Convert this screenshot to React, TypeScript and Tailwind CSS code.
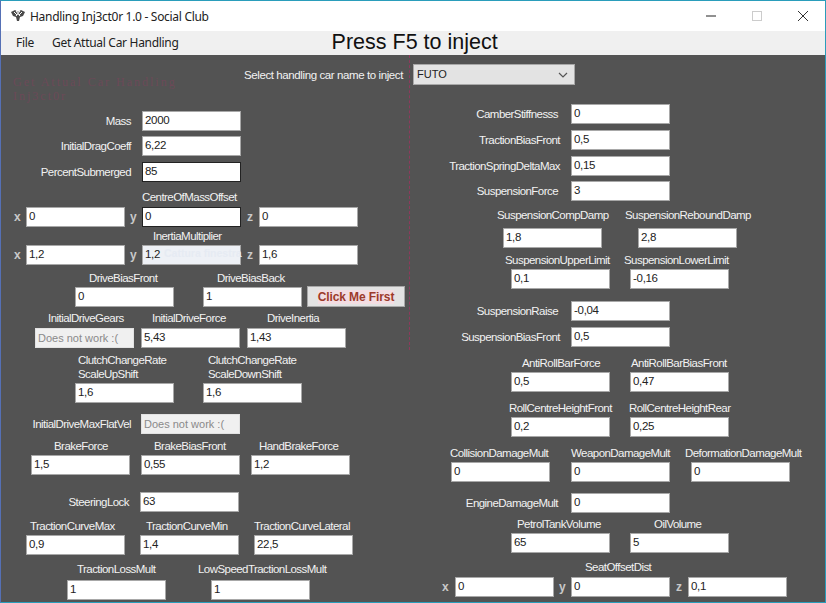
import React from 'react';

// one text box, WinForms look
const Box: React.FC<{ value: string; className?: string; dark?: boolean; off?: boolean }> = ({ value, className = '', dark, off }) => (
    <div
        className={`flex h-[20px] w-[99px] shrink-0 items-center whitespace-nowrap border pl-[2px] leading-none ${
            off
                ? 'border-[#e2e2e2] bg-[#f0f0f0] text-[11px] text-[#8a8a8a]'
                : dark
                  ? 'border-[#222222] bg-white text-[11.5px] tracking-[-0.3px] text-[#222222]'
                  : 'border-[#a8a8a8] bg-white text-[11.5px] tracking-[-0.3px] text-[#222222]'
        } ${className}`}
    >
        {value}
    </div>
);

const Label: React.FC<{ text: string; className?: string }> = ({ text, className = '' }) => (
    <span className={`block shrink-0 whitespace-nowrap text-[11.5px] leading-[14px] tracking-[-0.55px] text-[#f2f2f2] ${className}`}>{text}</span>
);

// right aligned label followed by box
const Inline: React.FC<{ label: string; value: string; labelWidth: string; className?: string; dark?: boolean; off?: boolean }> = ({ label, value, labelWidth, className = '', dark, off }) => (
    <div className={`flex items-center ${className}`}>
        <Label text={label} className={`text-right ${labelWidth}`} />
        <Box value={value} dark={dark} off={off} />
    </div>
);

const Axis: React.FC<{ text: string; className?: string }> = ({ text, className = '' }) => (
    <span className={`block shrink-0 text-[12px] font-bold leading-none text-[#c9c9c9] ${className}`}>{text}</span>
);

const LeftColumn = () => (
    <div className="w-[413px] shrink-0">
        <Inline label="Mass" value="2000" labelWidth="w-[130px] mr-[11px]" className="mt-[56px]" />
        <Inline label="InitialDragCoeff" value="6,22" labelWidth="w-[130px] mr-[11px]" className="mt-[5px]" />
        <Inline label="PercentSubmerged" value="85" labelWidth="w-[130px] mr-[11px]" className="mt-[6px]" dark />

        <Label text="CentreOfMassOffset" className="ml-[141px] mt-[8px]" />
        <div className="mt-[3px] flex items-center">
            <Axis text="x" className="ml-[13px] w-[12px]" />
            <Box value="0" />
            <Axis text="y" className="ml-[5px] w-[12px]" />
            <Box value="0" dark />
            <Axis text="z" className="ml-[6px] w-[12px]" />
            <Box value="0" />
        </div>

        <Label text="InertiaMultiplier" className="ml-[152px] mt-[2px]" />
        <div className="mt-[2px] flex items-center">
            <Axis text="x" className="ml-[13px] w-[12px]" />
            <Box value="1,2" />
            <Axis text="y" className="ml-[5px] w-[12px]" />
            <Box value="1,2" className="!bg-[#eef1f6]" />
            <Axis text="z" className="ml-[6px] w-[12px]" />
            <Box value="1,6" />
        </div>

        <div className="mt-[6px] flex">
            <Label text="DriveBiasFront" className="ml-[88px] w-[128px]" />
            <Label text="DriveBiasBack" />
        </div>
        <div className="mt-[1px] flex items-center">
            <Box value="0" className="ml-[74px]" />
            <Box value="1" className="ml-[29px]" />
            <div className="ml-[5px] flex h-[21px] w-[98px] items-center justify-center border border-[#a8a8a8] bg-[#e3e3e3]">
                <span className="bg-[#f3dde2] text-[12px] font-bold leading-[14px] tracking-[-0.1px] text-[#9c3a2a]">Click Me First</span>
            </div>
        </div>

        <div className="mt-[4px] flex">
            <Label text="InitialDriveGears" className="ml-[47px] w-[104px]" />
            <Label text="InitialDriveForce" className="w-[115px]" />
            <Label text="DriveInertia" />
        </div>
        <div className="mt-[3px] flex items-center">
            <Box value="Does not work :(" off className="ml-[34px]" />
            <Box value="5,43" className="ml-[7px]" />
            <Box value="1,43" className="ml-[7px]" />
        </div>

        <div className="mt-[5px] flex">
            <div className="ml-[77px] w-[130px]">
                <Label text="ClutchChangeRate" />
                <Label text="ScaleUpShift" />
            </div>
            <div>
                <Label text="ClutchChangeRate" />
                <Label text="ScaleDownShift" />
            </div>
        </div>
        <div className="mt-[2px] flex items-center">
            <Box value="1,6" className="ml-[74px]" />
            <Box value="1,6" className="ml-[29px]" />
        </div>

        <Inline label="InitialDriveMaxFlatVel" value="Does not work :(" off labelWidth="w-[130px] mr-[10px]" className="mt-[11px]" />

        <div className="mt-[5px] flex">
            <Label text="BrakeForce" className="ml-[53px] w-[100px]" />
            <Label text="BrakeBiasFront" className="w-[105px]" />
            <Label text="HandBrakeForce" />
        </div>
        <div className="mt-[2px] flex items-center">
            <Box value="1,5" className="ml-[30px]" />
            <Box value="0,55" className="ml-[11px]" />
            <Box value="1,2" className="ml-[11px]" />
        </div>

        <Inline label="SteeringLock" value="63" labelWidth="w-[128px] mr-[11px]" className="mt-[17px]" />

        <div className="mt-[7px] flex">
            <Label text="TractionCurveMax" className="ml-[29px] w-[116px]" />
            <Label text="TractionCurveMin" className="w-[108px]" />
            <Label text="TractionCurveLateral" />
        </div>
        <div className="mt-[2px] flex items-center">
            <Box value="0,9" className="ml-[25px]" />
            <Box value="1,4" className="ml-[15px]" />
            <Box value="22,5" className="ml-[15px]" />
        </div>

        <div className="mt-[7px] flex">
            <Label text="TractionLossMult" className="ml-[76px] w-[121px]" />
            <Label text="LowSpeedTractionLossMult" />
        </div>
        <div className="mt-[4px] flex items-center">
            <Box value="1" className="ml-[66px]" />
            <Box value="1" className="ml-[45px]" />
        </div>
    </div>
);

const RightColumn = () => (
    <div className="flex-1">
        <Inline label="CamberStiffnesss" value="0" labelWidth="w-[144px] mr-[13px]" className="mt-[49px]" />
        <Inline label="TractionBiasFront" value="0,5" labelWidth="w-[146px] mr-[11px]" className="mt-[6px]" />
        <Inline label="TractionSpringDeltaMax" value="0,15" labelWidth="w-[146px] mr-[11px]" className="mt-[6px]" />
        <Inline label="SuspensionForce" value="3" labelWidth="w-[144px] mr-[13px]" className="mt-[5px]" />

        <div className="mt-[7px] flex">
            <Label text="SuspensionCompDamp" className="ml-[83px] w-[128px]" />
            <Label text="SuspensionReboundDamp" />
        </div>
        <div className="mt-[6px] flex items-center">
            <Box value="1,8" className="ml-[89px]" />
            <Box value="2,8" className="ml-[36px]" />
        </div>

        <div className="mt-[5px] flex">
            <Label text="SuspensionUpperLimit" className="ml-[91px] w-[119px]" />
            <Label text="SuspensionLowerLimit" />
        </div>
        <div className="mt-[2px] flex items-center">
            <Box value="0,1" className="ml-[97px]" />
            <Box value="-0,16" className="ml-[20px]" />
        </div>

        <Inline label="SuspensionRaise" value="-0,04" labelWidth="w-[144px] mr-[13px]" className="mt-[12px]" />
        <Inline label="SuspensionBiasFront" value="0,5" labelWidth="w-[146px] mr-[11px]" className="mt-[6px]" />

        <div className="mt-[9px] flex">
            <Label text="AntiRollBarForce" className="ml-[108px] w-[109px]" />
            <Label text="AntiRollBarBiasFront" />
        </div>
        <div className="mt-[2px] flex items-center">
            <Box value="0,5" className="ml-[97px]" />
            <Box value="0,47" className="ml-[20px]" />
        </div>

        <div className="mt-[9px] flex">
            <Label text="RollCentreHeightFront" className="ml-[95px] w-[120px]" />
            <Label text="RollCentreHeightRear" />
        </div>
        <div className="mt-[2px] flex items-center">
            <Box value="0,2" className="ml-[97px]" />
            <Box value="0,25" className="ml-[20px]" />
        </div>

        <div className="mt-[9px] flex">
            <Label text="CollisionDamageMult" className="ml-[36px] w-[121px]" />
            <Label text="WeaponDamageMult" className="w-[114px]" />
            <Label text="DeformationDamageMult" />
        </div>
        <div className="mt-[2px] flex items-center">
            <Box value="0" className="ml-[37px]" />
            <Box value="0" className="ml-[21px]" />
            <Box value="0" className="ml-[21px]" />
        </div>

        <Inline label="EngineDamageMult" value="0" labelWidth="w-[144px] mr-[13px]" className="mt-[11px]" />

        <div className="mt-[4px] flex">
            <Label text="PetrolTankVolume" className="ml-[103px] w-[137px]" />
            <Label text="OilVolume" />
        </div>
        <div className="mt-[2px] flex items-center">
            <Box value="65" className="ml-[97px]" />
            <Box value="5" className="ml-[20px]" />
        </div>

        <Label text="SeatOffsetDist" className="ml-[171px] mt-[7px]" />
        <div className="mt-[3px] flex items-center">
            <Axis text="x" className="ml-[28px] w-[13px]" />
            <Box value="0" />
            <Axis text="y" className="ml-[5px] w-[12px]" />
            <Box value="0" />
            <Axis text="z" className="ml-[6px] w-[12px]" />
            <Box value="0,1" />
        </div>
    </div>
);

export default function App() {
    return (
        <div className="relative h-[603px] w-[826px] overflow-hidden border border-[#2a9dbb] border-l-[#5570b5] font-['Liberation_Sans',sans-serif]">
            <div className="flex h-[30px] items-center bg-white">
                <svg viewBox="0 0 16 16" className="ml-[9px] h-[16px] w-[16px]">
                    <path d="M1 4 L5 2 L8 4 L11 2 L15 4 L13 8 L10 9 L9 13 L7 13 L6 9 L3 8 Z" fill="#4a4a4a" />
                    <path d="M4 4 L7 7 M12 4 L9 7 M6 3 L10 8 M10 3 L6 8" stroke="#ffffff" strokeWidth="1" fill="none" />
                </svg>
                <span className="ml-[4px] mt-[1px] font-['Noto_Sans',sans-serif] text-[12px] tracking-[-0.3px] text-[#222222]">Handling Inj3ct0r 1.0 - Social Club</span>
                <div className="ml-auto flex items-center text-[#333333]">
                    <svg viewBox="0 0 10 10" className="h-[10px] w-[10px]"><path d="M0 5 H10" stroke="#222222" strokeWidth="1" /></svg>
                    <svg viewBox="0 0 10 10" className="ml-[36px] h-[10px] w-[10px]"><rect x="0.5" y="0.5" width="9" height="9" fill="none" stroke="#cccccc" /></svg>
                    <svg viewBox="0 0 10 10" className="ml-[36px] mr-[17px] h-[10px] w-[10px]"><path d="M0 0 L10 10 M10 0 L0 10" stroke="#333333" strokeWidth="1" /></svg>
                </div>
            </div>
            <div className="flex h-[24px] items-center bg-[#f0f0f0]">
                <span className="ml-[15px] font-['Noto_Sans',sans-serif] text-[12px] tracking-[-0.3px] text-[#222222]">File</span>
                <span className="ml-[18px] font-['Noto_Sans',sans-serif] text-[12px] tracking-[-0.3px] text-[#222222]">Get Attual Car Handling</span>
                <span className="ml-[153px] text-[21.5px] leading-none text-[#111111]">Press F5 to inject</span>
            </div>
            <div className="relative flex h-[547px] bg-[#535353]">
                <LeftColumn />
                <RightColumn />
                <div className="absolute left-[243px] top-[9px] flex items-center">
                    <Label text="Select handling car name to inject" className="mr-[10px] !tracking-[-0.4px]" />
                    <div className="flex h-[21px] w-[162px] items-center justify-between border border-[#a8a8a8] bg-[#e3e3e3] pl-[3px] pr-[6px] text-[11px] text-[#222222]">
                        FUTO
                        <svg viewBox="0 0 10 6" className="h-[6px] w-[10px]"><path d="M1 1 L5 5 L9 1" stroke="#555555" strokeWidth="1.2" fill="none" /></svg>
                    </div>
                </div>
                {/* leftovers of a window caught in the screenshot */}
                <div className="pointer-events-none absolute left-[12px] top-[20px] font-['Liberation_Serif',serif] text-[12px] leading-[14px] tracking-[2px] text-[#6b4a58]">
                    Get Attual Car Handling
                    <br />
                    Inj3ct0r
                </div>
                <div className="pointer-events-none absolute left-[163px] top-[191px] text-[10.5px] font-bold leading-[14px] text-[#e6ebf3]">Cattura finestra</div>
                <div className="pointer-events-none absolute left-[408px] top-0 h-[295px] border-l border-dashed border-[#8e3a5c]" />
            </div>
        </div>
    );
}
